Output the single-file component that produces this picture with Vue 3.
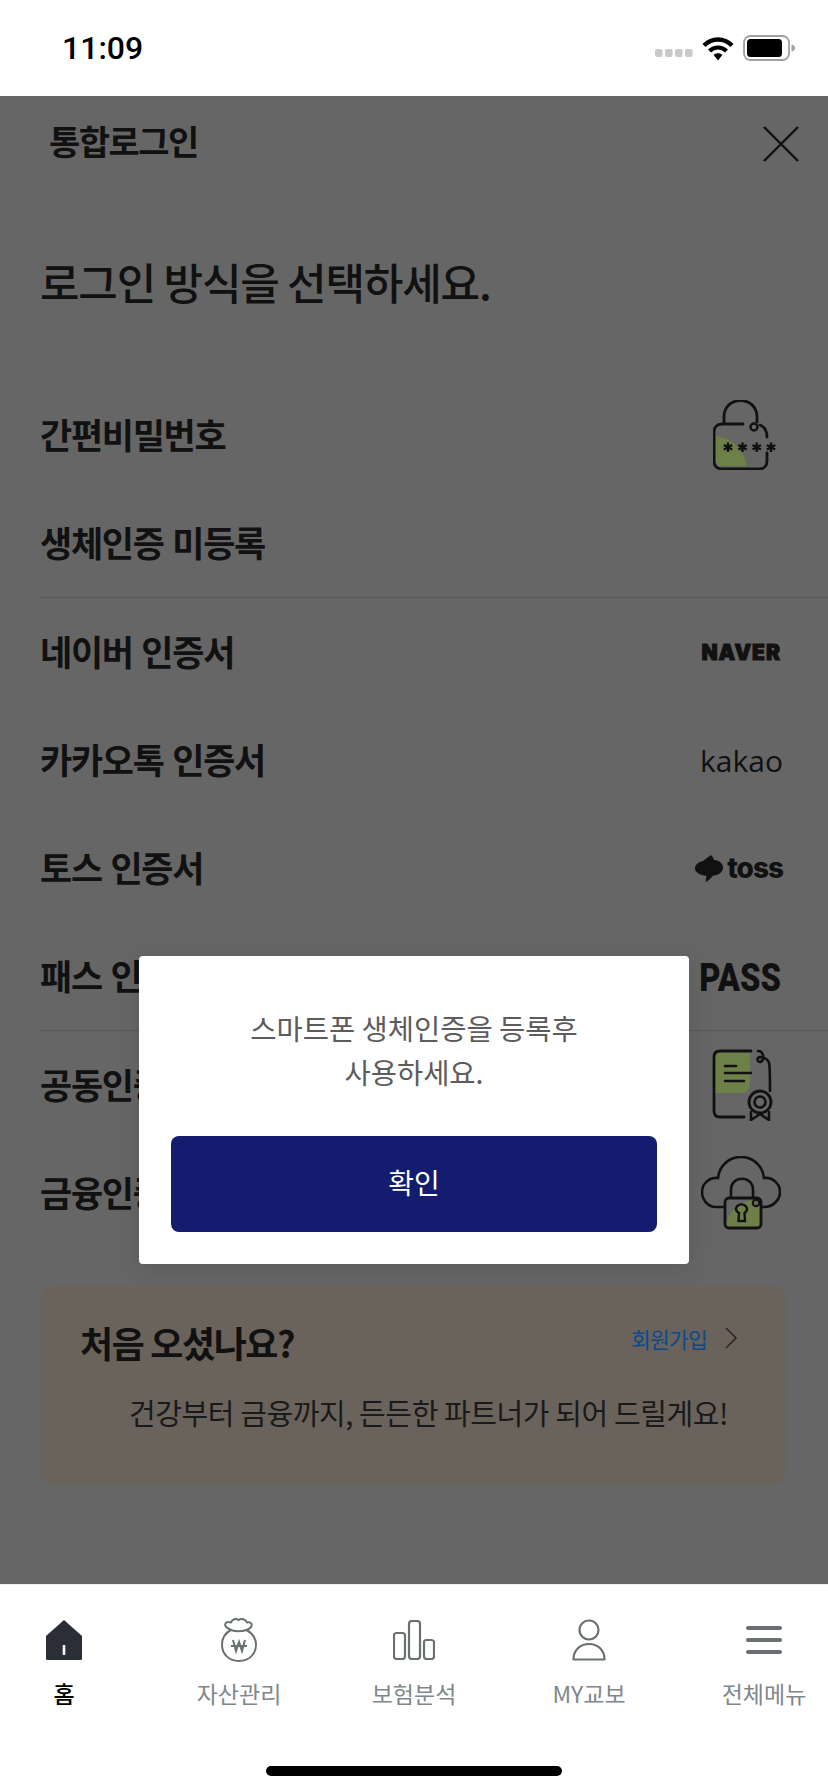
<template>
  <div class="phone">
    <div class="statusBar">
      <span class="clock">11:09</span>
      <div class="statusIcons">
        <svg width="38" height="8" viewBox="0 0 38 8"><rect v-for="x in [0, 10, 20, 30]" :key="x" :x="x" y="0" width="7.5" height="8" rx="2" fill="#c9c9c9" /></svg>
        <svg width="32" height="25" viewBox="0 0 32 25">
          <path d="M2 9.5C10 1.5 22 1.5 30 9.5" fill="none" stroke="#000" stroke-width="4.4" />
          <path d="M7.5 15C12.5 10.3 19.5 10.3 24.5 15" fill="none" stroke="#000" stroke-width="4.2" />
          <path d="M11.5 18.8C14.3 16.6 17.7 16.6 20.5 18.8L16 24.5Z" fill="#000" />
        </svg>
        <svg width="54" height="26" viewBox="0 0 54 26">
          <rect x="1" y="1" width="45" height="24" rx="6.5" fill="none" stroke="#a0a0a0" stroke-width="1.8" />
          <rect x="4" y="4" width="35" height="18" rx="3.5" fill="#000" />
          <path d="M48.5 9.5C51 10 52 11.5 52 13s-1 3-3.500 3.500Z" fill="#a0a0a0" />
        </svg>
      </div>
    </div>

    <main class="sheet">
      <header class="topBar">
        <h2>통합로그인</h2>
        <svg width="36" height="36" viewBox="0 0 36 36"><path d="M1 1L35 35M35 1L1 35" stroke="#111" stroke-width="2.400" fill="none" /></svg>
      </header>
      <h1 class="heading">로그인 방식을 선택하세요.</h1>

      <ul class="methods">
        <li v-for="item in methods" :key="item.name" :class="{ divided: item.divided }">
          <span class="methodName">{{ item.name }}</span>
          <div class="methodLogo">
            <svg v-if="item.logo === 'lock'" class="lockIcon" width="64" height="70" viewBox="0 0 64 70">
              <path d="M3 36C19 38 31 50 34 66H9C5 66 3 64 3 60Z" fill="#6d8048" />
              <path d="M11 24V17C11 -5 44 -5 44 17V23" fill="none" stroke="#111" stroke-width="2.800" />
              <path d="M30 24H9C4 24 1 27 1 32V61C1 66 4 69 9 69H46C51 69 54 66 54 61V53M54 37C54 31 52 27 47 25" fill="none" stroke="#111" stroke-width="2.800" stroke-linecap="round" />
              <circle cx="41" cy="27" r="3.500" fill="none" stroke="#111" stroke-width="2.400" />
              <g v-for="x in [15, 29.500, 43.700, 58]" :key="x" stroke="#111" stroke-width="2.400">
                <path :d="`M${x} 42.500V52M${x - 4.200} 45L${x + 4.200} 49.500M${x + 4.200} 45L${x - 4.200} 49.500`" />
              </g>
            </svg>
            <span v-else-if="item.logo === 'naver'" class="naver">NAVER</span>
            <span v-else-if="item.logo === 'kakao'" class="kakao">kakao</span>
            <div v-else-if="item.logo === 'toss'" class="toss">
              <svg width="28" height="27" viewBox="0 0 28 27">
                <path d="M16 0C17.500 1.500 18.500 3 19 5C24.500 5.500 28 8.500 28 12.500C28 17 24 20 18.500 20.500C16 23 13.500 25.500 11 27C10.500 25 11 23 11.500 21C5 20 0 17.500 0 13.500C0 9.500 3.500 7 8 6C10.500 4 13 2 16 0Z" fill="#111" />
              </svg>
              <span>toss</span>
            </div>
            <span v-else-if="item.logo === 'pass'" class="pass">PASS</span>
            <svg v-else-if="item.logo === 'cert'" class="certIcon" width="62" height="72" viewBox="0 0 62 72">
              <path d="M3 3H38V36C38 40 34 44 30 44H3Z" fill="#6d8048" />
              <path d="M39 2H8C4 2 2 4 2 8V62C2 66 4 68 8 68H32" fill="none" stroke="#111" stroke-width="2.800" stroke-linecap="round" />
              <path d="M46 2C52 2 52 10 50 12C48 14 44 12 46 9C48 7 56 9 57 14C58 17 58 30 58 42" fill="none" stroke="#111" stroke-width="2.600" stroke-linecap="round" />
              <path d="M13 17H24M13 24H39M13 32H32" stroke="#111" stroke-width="2.600" stroke-linecap="round" />
              <circle cx="48" cy="53" r="11" fill="#666" stroke="#111" stroke-width="2.800" />
              <circle cx="48" cy="53" r="5.500" fill="none" stroke="#111" stroke-width="2.600" />
              <path d="M39 62V71L48 65L57 71V62" fill="none" stroke="#111" stroke-width="2.600" stroke-linejoin="round" />
            </svg>
            <svg v-else-if="item.logo === 'cloud'" width="80" height="74" viewBox="0 0 80 74">
              <path d="M24 51H15C6 51 1 43 1 36C1 28 8 21 17 22C18 10 28 1 40 1C52 1 62 10 63 22C72 21 79 28 79 36C79 44 72 51 63 51H56" fill="none" stroke="#111" stroke-width="2.600" stroke-linecap="round" />
              <path d="M30 42V34C30 19 52 19 52 34V42" fill="none" stroke="#111" stroke-width="2.600" />
              <path d="M25 71C26 58 36 44 60 43V62C60 68 58 71 54 71Z" fill="#6d8048" />
              <rect x="24" y="42" width="36" height="30" rx="4" fill="none" stroke="#111" stroke-width="2.800" />
              <circle cx="55" cy="47" r="3.300" fill="#666" stroke="#111" stroke-width="2" />
              <path d="M35.500 51C38 47.500 43 47.500 45.500 51C46.500 53 45.500 55.500 43.500 57L44 65H37.500L38 57C35.500 55.500 34.500 53 35.500 51Z" fill="none" stroke="#111" stroke-width="2.400" />
            </svg>
          </div>
        </li>
      </ul>

      <section class="joinCard">
        <div class="joinTop">
          <strong>처음 오셨나요?</strong>
          <div class="joinLink">
            <span>회원가입</span>
            <svg width="14" height="22" viewBox="0 0 14 22"><path d="M2 1L12 11L2 21" fill="none" stroke="#2a2a2a" stroke-width="1.600" /></svg>
          </div>
        </div>
        <p>건강부터 금융까지, 든든한 파트너가 되어 드릴게요!</p>
      </section>

      <div class="dialog">
        <p>스마트폰 생체인증을 등록후<br />사용하세요.</p>
        <button type="button">확인</button>
      </div>
    </main>

    <nav class="tabBar">
      <div class="tabs">
        <div v-for="tab in tabs" :key="tab.label" class="tab" :class="{ active: tab.active }">
          <div class="tabIcon">
            <svg v-if="tab.icon === 'home'" width="36" height="40" viewBox="0 0 36 40">
              <path d="M18 0L36 16V38.500Q36 40 34.500 40H1.500Q0 40 0 38.500V16Z" fill="#2b2e37" />
              <rect x="16.700" y="25" width="2.600" height="10" fill="#fff" />
            </svg>
            <svg v-else-if="tab.icon === 'asset'" width="36" height="44" viewBox="0 0 36 44">
              <path d="M10 12C6 10 3 8 4.500 5.500C5.500 3.500 8 4 10 4.500C11 1 15 0 17.500 2C20 0 25 1 26 4.500C28.500 3.500 31.500 5 30.500 8C30 10 28 11 25.500 12C31 15 35 20 35 27C35 36 28 43 18 43C8 43 1 36 1 27C1 20 4 15 10 12Z" fill="none" stroke="#697072" stroke-width="2" stroke-linejoin="round" />
              <path d="M10 12C14 13.500 21 13.500 25.500 12" fill="none" stroke="#697072" stroke-width="2" />
              <path d="M12 22L15 33L18 24L21 33L24 22M10 28H26" fill="none" stroke="#697072" stroke-width="2" />
            </svg>
            <svg v-else-if="tab.icon === 'bars'" width="42" height="40" viewBox="0 0 42 40">
              <rect x="1" y="13" width="11" height="26" rx="2.500" fill="none" stroke="#697072" stroke-width="2.200" />
              <rect x="16" y="1" width="11" height="38" rx="3" fill="none" stroke="#697072" stroke-width="2.200" />
              <rect x="31" y="20" width="10" height="19" rx="2.500" fill="none" stroke="#697072" stroke-width="2.200" />
            </svg>
            <svg v-else-if="tab.icon === 'my'" width="34" height="42" viewBox="0 0 34 42">
              <circle cx="17" cy="11" r="9.500" fill="none" stroke="#697072" stroke-width="2.200" />
              <path d="M1.500 40.500C1.500 31 8 25 17 25C26 25 32.500 31 32.500 40.500Z" fill="none" stroke="#697072" stroke-width="2.200" stroke-linejoin="round" />
            </svg>
            <svg v-else width="36" height="28" viewBox="0 0 36 28">
              <path d="M2 2H34M2 14H34M2 26H34" stroke="#697072" stroke-width="4" stroke-linecap="round" />
            </svg>
          </div>
          <span>{{ tab.label }}</span>
        </div>
      </div>
      <div class="homeBar"></div>
    </nav>
  </div>
</template>

<script setup>
const methods = [
  { name: '간편비밀번호', logo: 'lock' },
  { name: '생체인증 미등록', divided: true },
  { name: '네이버 인증서', logo: 'naver' },
  { name: '카카오톡 인증서', logo: 'kakao' },
  { name: '토스 인증서', logo: 'toss' },
  { name: '패스 인증서', logo: 'pass', divided: true },
  { name: '공동인증서', logo: 'cert' },
  { name: '금융인증서', logo: 'cloud' }
]

const tabs = [
  { label: '홈', icon: 'home', active: true },
  { label: '자산관리', icon: 'asset' },
  { label: '보험분석', icon: 'bars' },
  { label: 'MY교보', icon: 'my' },
  { label: '전체메뉴', icon: 'menu' }
]
</script>

<style>
html, body { margin: 0; background: #fff; }
</style>

<style scoped>
.phone {
  display: flex;
  flex-direction: column;
  width: 828px;
  height: 1792px;
  overflow: hidden;
  background: #fff;
  font-family: "Noto Sans CJK KR", "Noto Sans", sans-serif;
  color: #111;
}
.statusBar {
  display: flex;
  flex: none;
  align-items: center;
  justify-content: space-between;
  height: 96px;
  padding: 0 31px 0 62px;
  box-sizing: border-box;
}
.clock {
  font-family: Roboto, sans-serif;
  font-size: 32px;
  font-weight: 500;
  color: #000;
}
.statusIcons {
  display: flex;
  align-items: flex-end;
  gap: 9px;
}
.statusIcons svg:first-child { margin-bottom: 4px; }

.sheet {
  position: relative;
  flex: none;
  height: 1488px;
  background: #666;
}
.topBar {
  display: flex;
  align-items: center;
  justify-content: space-between;
  height: 96px;
  padding: 0 29px 0 49px;
  box-sizing: border-box;
}
.topBar h2 {
  margin: 0 0 8px;
  font-size: 34px;
  font-weight: 700;
  letter-spacing: -1.500px;
}
.heading {
  margin: 61px 0 0;
  padding-left: 40px;
  font-size: 43px;
  font-weight: 500;
  line-height: 56px;
  letter-spacing: -1.200px;
}
.methods {
  margin: 72px 0 0;
  padding: 0;
  list-style: none;
}
.methods li {
  display: flex;
  align-items: center;
  justify-content: space-between;
  height: 108px;
  margin-left: 40px;
  padding-right: 47px;
  box-sizing: border-box;
}
.methods li.divided {
  height: 109px;
  border-bottom: 1px solid #585858;
}
.methodName {
  margin-bottom: 4px;
  font-size: 35px;
  font-weight: 700;
  letter-spacing: -1.300px;
  word-spacing: 2px;
}
.methodLogo {
  display: flex;
  align-items: center;
  justify-content: flex-end;
}
.lockIcon { margin-right: 4px; }
.certIcon { margin-right: 7px; }
.naver {
  font-family: Inter, sans-serif;
  font-size: 21px;
  font-weight: 900;
  letter-spacing: 1px;
  -webkit-text-stroke: 1px #111;
}
.kakao {
  margin-right: -2px;
  font-family: "Open Sans", sans-serif;
  font-size: 30px;
  font-weight: 400;
}
.toss {
  display: flex;
  align-items: center;
  gap: 4px;
  margin-right: -2px;
  font-family: Inter, sans-serif;
  font-size: 28px;
  font-weight: 800;
  letter-spacing: -1px;
}
.pass {
  margin-top: 3px;
  font-family: Roboto, sans-serif;
  font-size: 38px;
  font-weight: 900;
  transform: scaleX(0.86);
  transform-origin: right center;
}
.joinCard {
  width: 745px;
  height: 199px;
  margin: 39px 0 0 41px;
  padding: 32px 48px 0 39px;
  box-sizing: border-box;
  border-radius: 14px;
  background: #69635c;
}
.joinTop {
  display: flex;
  align-items: flex-start;
  justify-content: space-between;
}
.joinTop strong {
  font-size: 36px;
  font-weight: 700;
  line-height: 48px;
  letter-spacing: -1.400px;
}
.joinLink {
  display: flex;
  align-items: center;
  gap: 17px;
  height: 40px;
  font-size: 21.500px;
  letter-spacing: -0.800px;
  color: #0c4a8c;
}
.joinCard p {
  margin: 25px 10px 0 0;
  font-size: 29px;
  line-height: 42px;
  text-align: right;
  letter-spacing: -0.400px;
  color: #1a1a1a;
}
.dialog {
  position: absolute;
  top: 860px;
  left: 139px;
  width: 550px;
  height: 308px;
  padding: 50px 32px 0;
  box-sizing: border-box;
  border-radius: 4px;
  background: #fff;
  box-shadow: 0 4px 24px rgba(0, 0, 0, 0.12);
  text-align: center;
}
.dialog p {
  margin: 0 0 42px;
  font-size: 28.500px;
  line-height: 44px;
  color: #5c5c5c;
}
.dialog button {
  display: block;
  width: 100%;
  height: 96px;
  padding: 0 0 4px;
  border: 0;
  border-radius: 8px;
  background: #141c70;
  font-family: inherit;
  font-size: 28px;
  color: #fff;
}

.tabBar {
  display: flex;
  flex: 1;
  flex-direction: column;
  border-top: 1px solid #eee;
}
.tabs {
  display: flex;
  justify-content: space-between;
  padding: 33px 12px 0;
}
.tab {
  display: flex;
  flex-direction: column;
  align-items: center;
  width: 104px;
  font-size: 23px;
  line-height: 30px;
  white-space: nowrap;
  color: #80878a;
}
.tab.active {
  font-weight: 500;
  color: #000;
}
.tabIcon {
  display: flex;
  align-items: center;
  justify-content: center;
  height: 44px;
  margin-bottom: 16px;
}
.homeBar {
  width: 296px;
  height: 10px;
  margin: auto auto 16px;
  border-radius: 5px;
  background: #000;
}
</style>
